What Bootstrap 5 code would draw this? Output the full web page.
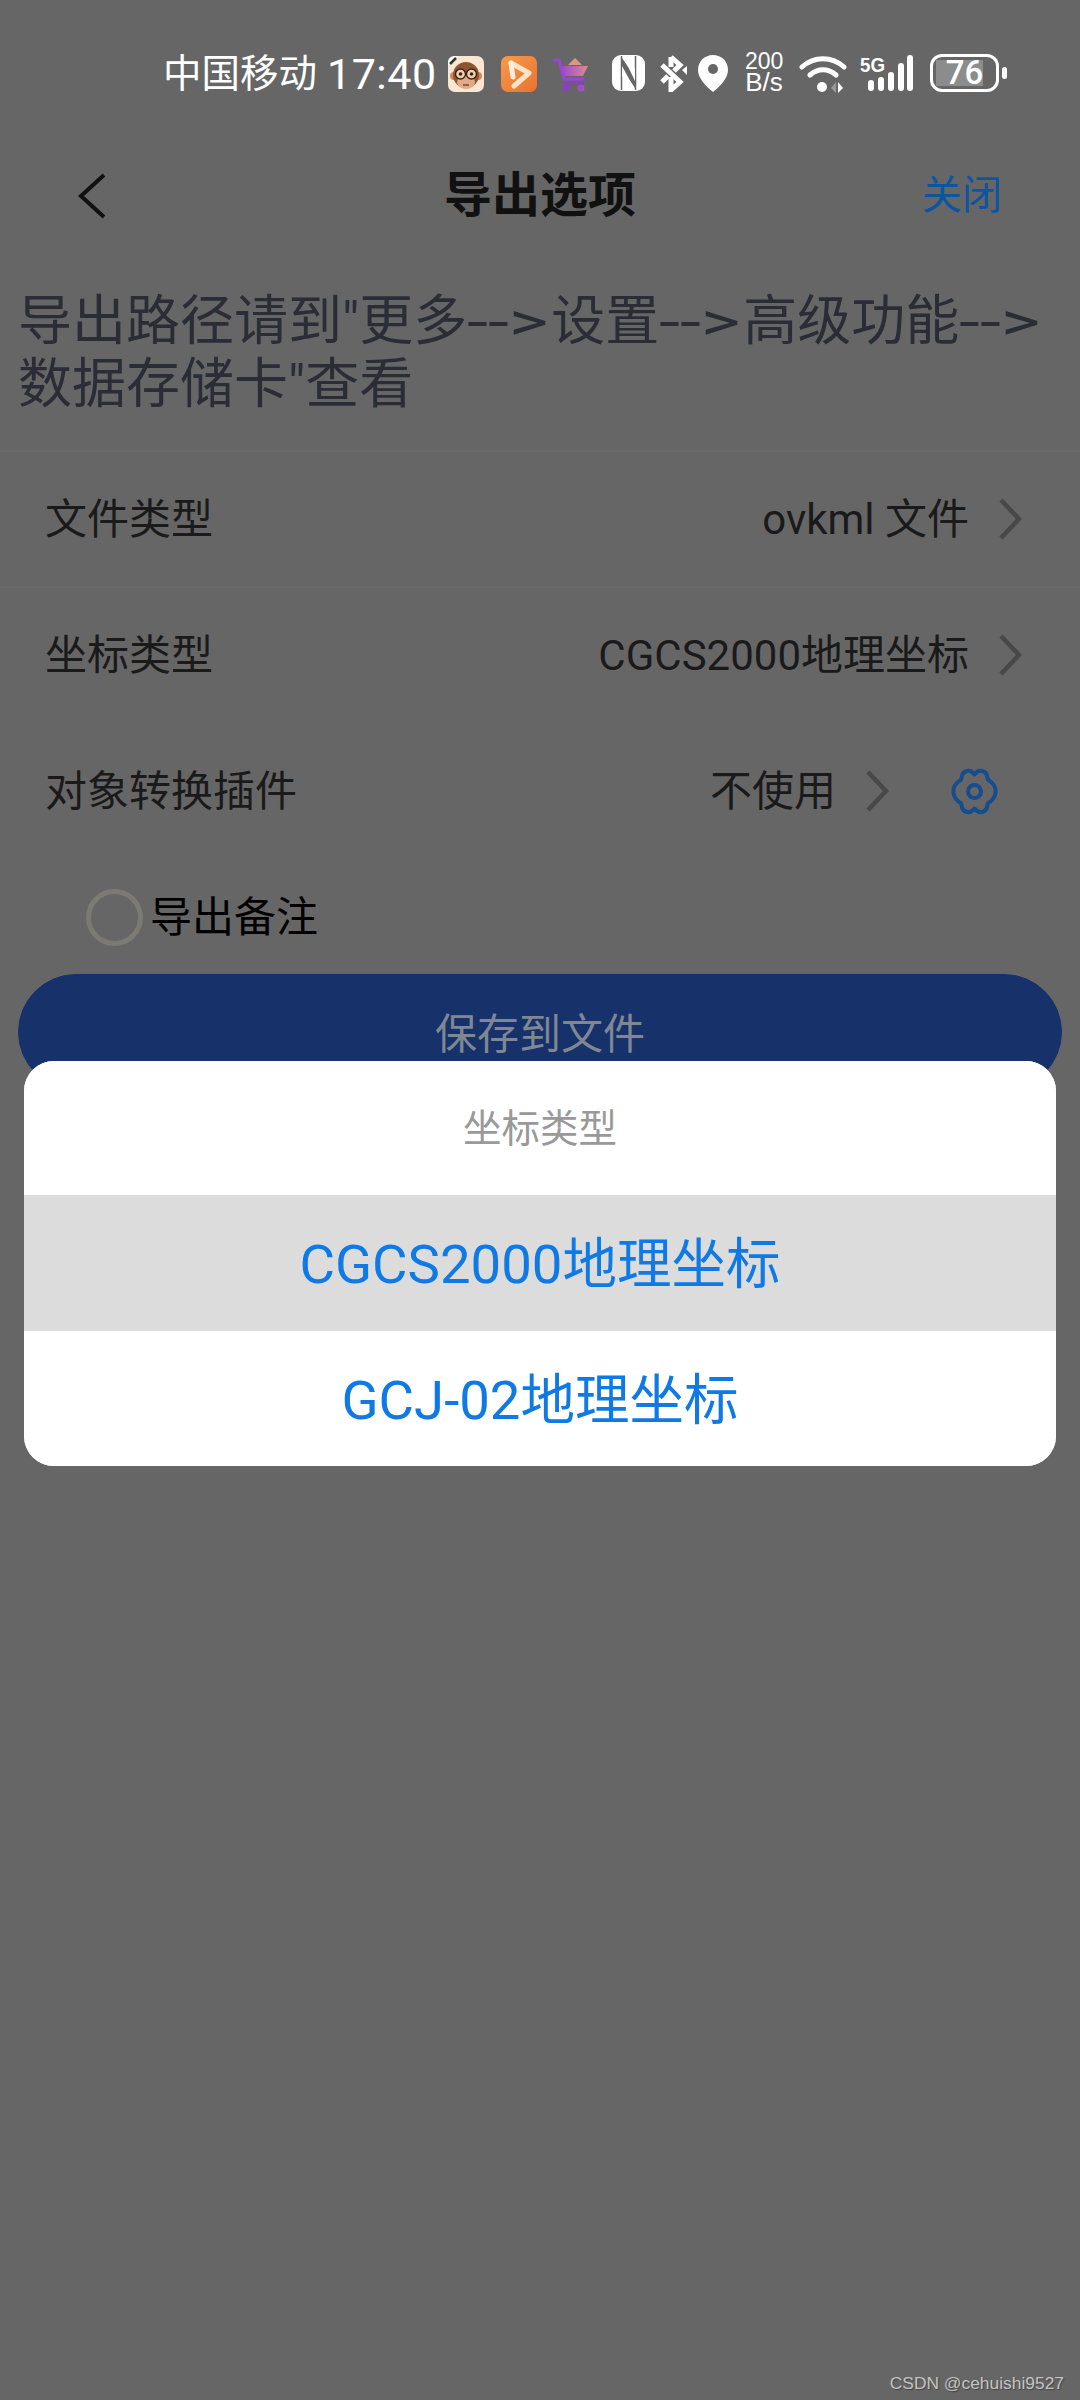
<!DOCTYPE html>
<html lang="zh-CN">
<head>
<meta charset="UTF-8">
<meta name="viewport" content="width=device-width, initial-scale=1.0">
<title>导出选项</title>
<link href="https://cdn.jsdelivr.net/npm/bootstrap@5.3.0/dist/css/bootstrap.min.css" rel="stylesheet">
<style>
body { background: #666; font-family: Roboto, "Noto Sans CJK SC", sans-serif; }
.phone { width: 1080px; height: 2400px; background: #666; position: relative; overflow: hidden; }

/* status bar */
.status-bar { height: 110px; padding: 50px 0 0 163px; color: #fff; align-items: flex-start; }
.carrier { font-size: 38.500px; line-height: 48px; width: 164px; }
.clock { font-size: 43px; line-height: 48px; width: 122px; letter-spacing: .5px; }
.status-bar svg { display: block; flex: none; }
.speed { width: 38px; margin: 1px 16px 0 17px; font-size: 23px; line-height: 20px; text-align: center; font-family: "Liberation Sans", sans-serif; }
.speed span { display: block; font-size: 26px; line-height: 23px; }
.batt { width: 69px; height: 38px; margin: 4px 3px 0 16px; border: 3px solid #fff; border-radius: 12px; position: relative; font-size: 33px; line-height: 32px; text-align: center; }
.batt-fill { position: absolute; left: 3px; top: 3px; bottom: 3px; background: #8c8c8c; }
.batt b { position: relative; font-weight: 500; }
.batt-nub { width: 5px; height: 12px; margin-top: 17px; background: #fff; border-radius: 3px; }

/* nav */
.top-nav { height: 172px; padding: 0 78px; position: relative; }
.top-title { flex: 1; text-align: center; font-size: 48px; font-weight: 700; color: #111; padding-left: 52px; }
.top-close { font-size: 40px; color: #0e55a1; }

.hint-text { margin: 0; padding: 8px 18px 34px; font-size: 54px; line-height: 63px; color: #2a2d36; white-space: nowrap; }
.hint-arrow { display: inline-block; width: 84px; transform: scaleX(1.4); transform-origin: left center; }

.opt-row { height: 136px; padding: 0 58px 0 45px; font-size: 42px; color: #1a1a1a; border-top: 2px solid #6a6a6a; }
.opt-row + .opt-row { border-top-color: #696969; }
.opt-row.last { border-top: 0; padding: 2px 80px 0 45px; }
.opt-value { font-size: 42px; margin-right: 29px; }
.opt-row.last .opt-chev { margin-right: -5px; }
.opt-gear { margin-left: 66px; margin-right: 1px; }

.check-row { height: 116px; padding: 2px 0 0 86px; font-size: 42px; color: #000; }
.check-dot { width: 57px; height: 57px; border-radius: 50%; border: 5px solid #7b7b73; margin-right: 7px; flex: none; }

.save-wrap { padding: 0 18px; }
.save-btn { height: 116px; padding-top: 10px; --bs-btn-bg: #17316b; --bs-btn-color: #7f8794; --bs-btn-border-color: #17316b; --bs-btn-font-size: 42px; --bs-btn-border-radius: 58px; }

/* action sheet */
.sheet { position: absolute; left: 24px; top: 1061px; width: 1032px; height: 405px; border: 0; border-radius: 30px; overflow: hidden; }
.sheet .list-group-item { border: 0; padding: 4px 0 0; display: flex; align-items: center; justify-content: center; text-align: center; background: #fff; color: #0f7ae5; font-size: 54.500px; height: 136px; }
.sheet .sheet-head { height: 134px; padding-top: 2px; color: #999; font-size: 38.500px; }
.sheet .sheet-pick { background: #dcdcdc; }

.mark-text { position: absolute; right: 16px; top: 2371px; font-family: "Liberation Sans", sans-serif; font-size: 17.400px; line-height: 24px; color: #c4c4c4; text-shadow: 1px 1px 1px #444; }
</style>
</head>
<body class="m-0">
<div class="phone d-flex flex-column">

  <!-- status bar -->
  <div class="status-bar d-flex">
    <div class="carrier">中国移动</div>
    <div class="clock">17:40</div>
    <svg width="36" height="36" viewBox="0 0 36 36" style="margin:6px 0 0 -1px">
      <rect width="36" height="36" rx="7" fill="#fbe6d2"/>
      <path d="M0 9V7Q0 0 7 0H9Z" fill="#fff"/>
      <path d="M2 8 8 2" stroke="#333" stroke-width="2.500"/>
      <circle cx="6" cy="20" r="4" fill="#c98a62"/><circle cx="30" cy="20" r="4" fill="#c98a62"/>
      <circle cx="18" cy="19" r="13" fill="#8f5232"/>
      <ellipse cx="18" cy="26" rx="9" ry="7" fill="#e2ab86"/>
      <circle cx="12.500" cy="18" r="5" fill="#f2cfae" stroke="#3a2418" stroke-width="1.400"/>
      <circle cx="23.500" cy="18" r="5" fill="#f2cfae" stroke="#3a2418" stroke-width="1.400"/>
      <circle cx="12.500" cy="18" r="1.800" fill="#3a2418"/><circle cx="23.500" cy="18" r="1.800" fill="#3a2418"/>
      <path d="M15 29h6" stroke="#7a4326" stroke-width="1.400"/>
    </svg>
    <svg width="36" height="36" viewBox="0 0 36 36" style="margin:6px 0 0 17px">
      <defs><linearGradient id="playGrad" x1="0" y1="0" x2="1" y2="1"><stop offset="0" stop-color="#f79a4c"/><stop offset="1" stop-color="#e9722f"/></linearGradient></defs>
      <rect width="36" height="36" rx="7" fill="url(#playGrad)"/>
      <path d="M10 7 28 17 13 30" fill="none" stroke="#fde3c8" stroke-width="5" stroke-linecap="round" stroke-linejoin="round"/>
      <path d="M10 7 12 21" stroke="#fdeedd" stroke-width="5" stroke-linecap="round"/>
    </svg>
    <svg width="38" height="36" viewBox="0 0 38 36" style="margin:7px 0 0 15px">
      <defs><linearGradient id="cartGrad" x1="0" x2="1"><stop offset="0" stop-color="#9a45d8"/><stop offset="1" stop-color="#d68f8a"/></linearGradient></defs>
      <path d="M1 3H7L12 22H32" fill="none" stroke="#9a45d8" stroke-width="3"/>
      <path d="M9 9H36L31 19H12Z" fill="url(#cartGrad)"/>
      <path d="M16 8 23 1 30 8Z" fill="#d99a7e"/>
      <circle cx="14" cy="31" r="3.500" fill="#8a3fc8"/><circle cx="29" cy="31" r="3.500" fill="#a04fc8"/>
      <path d="M12 26H32" stroke="#8a3fc8" stroke-width="2.500"/>
    </svg>
    <svg width="33" height="36" viewBox="0 0 33 36" style="margin:5px 0 0 22px">
      <rect width="33" height="36" rx="9" fill="#fff"/>
      <path d="M9.500 1V35M23.500 1V35" stroke="#666" stroke-width="1.500"/>
      <path d="M10 3V14L23 33V22Z" fill="#666"/>
      <path d="M12 3H16L23 14V26Z" fill="#fff"/>
      <path d="M10 11 22 33H17L10 21Z" fill="#fff"/>
    </svg>
    <svg width="27" height="37" viewBox="0 0 27 37" style="margin:5px 0 0 15px">
      <path d="M2 10 20 27 11 35V22M2 27 8 21M11 2 20 10 14 16M11 2V12" fill="none" stroke="#fff" stroke-width="5"/>
      <path d="M22 15 27 11V20Z" fill="#fff"/>
    </svg>
    <svg width="30" height="37" viewBox="0 0 30 37" style="margin:5px 0 0 11px">
      <path d="M15 0C6.500 0 0 6.500 0 15 0 24 9 32 15 37 21 32 30 24 30 15 30 6.500 23.500 0 15 0Z" fill="#fff"/>
      <circle cx="15" cy="14" r="5" fill="#666"/>
    </svg>
    <div class="speed">200<span>B/s</span></div>
    <svg width="48" height="38" viewBox="0 0 48 38" style="margin-top:5px">
      <path d="M3 12C15 1 33 1 45 12M11 20C19 13 29 13 37 20" fill="none" stroke="#fff" stroke-width="5" stroke-linecap="round"/>
      <circle cx="23" cy="32" r="5" fill="#fff"/>
      <path d="M32 33 37 27V38Z" fill="#999"/>
      <path d="M39 27 44 33 39 38Z" fill="#fff"/>
    </svg>
    <svg width="54" height="42" viewBox="0 0 54 42" style="margin:1px 0 0 13px">
      <text x="0" y="21" font-family="Liberation Sans, sans-serif" font-size="20" font-weight="700" fill="#fff" textLength="25" lengthAdjust="spacingAndGlyphs">5G</text>
      <rect x="8" y="29" width="6" height="11" rx="3" fill="#fff"/>
      <rect x="18" y="26" width="6" height="14" rx="3" fill="#fff"/>
      <rect x="28" y="21" width="6" height="19" rx="3" fill="#fff"/>
      <rect x="38" y="12" width="6" height="28" rx="3" fill="#fff"/>
      <rect x="47" y="4" width="6" height="36" rx="3" fill="#fff"/>
    </svg>
    <div class="batt"><div class="batt-fill" style="width:47px"></div><b>76</b></div>
    <div class="batt-nub"></div>
  </div>

  <!-- header -->
  <div class="top-nav d-flex align-items-center">
    <svg width="28" height="46" viewBox="0 0 28 46"><path d="M26 2 3 23 26 44" fill="none" stroke="#111" stroke-width="4"/></svg>
    <div class="top-title">导出选项</div>
    <div class="top-close">关闭</div>
  </div>

  <p class="hint-text">导出路径请到"更多<span class="hint-arrow">--&gt;</span>设置<span class="hint-arrow">--&gt;</span>高级功能<span class="hint-arrow">--&gt;</span><br>数据存储卡"查看</p>

  <div class="opt-row d-flex align-items-center justify-content-between">
    <span>文件类型</span>
    <span class="d-flex align-items-center"><span class="opt-value">ovkml 文件</span>
      <svg width="24" height="42" viewBox="0 0 24 42"><path d="M3 2 21 21 3 40" fill="none" stroke="#484848" stroke-width="4.500"/></svg></span>
  </div>
  <div class="opt-row d-flex align-items-center justify-content-between">
    <span>坐标类型</span>
    <span class="d-flex align-items-center"><span class="opt-value">CGCS2000地理坐标</span>
      <svg width="24" height="42" viewBox="0 0 24 42"><path d="M3 2 21 21 3 40" fill="none" stroke="#484848" stroke-width="4.500"/></svg></span>
  </div>
  <div class="opt-row last d-flex align-items-center justify-content-between">
    <span>对象转换插件</span>
    <span class="d-flex align-items-center"><span class="opt-value">不使用</span>
      <svg class="opt-chev" width="24" height="42" viewBox="0 0 24 42"><path d="M3 2 21 21 3 40" fill="none" stroke="#484848" stroke-width="4.500"/></svg>
      <svg class="opt-gear" width="49" height="47" viewBox="0 0 49 47">
        <path d="M24.500 6.500Q28 2 32 3Q37 4 37.500 10Q37.500 12 40 13Q46 18 45.500 23.500Q46 29 40 34Q37.500 35 37.500 37Q37 43 32 44Q28 45 24.500 40.500Q21 45 17 44Q12 43 11.500 37Q11.500 35 9 34Q3 29 3.500 23.500Q3 18 9 13Q11.500 12 11.500 10Q12 4 17 3Q21 2 24.500 6.500Z" fill="none" stroke="#174c8e" stroke-width="4" stroke-linejoin="round"/>
        <circle cx="24.500" cy="23.500" r="6.500" fill="none" stroke="#174c8e" stroke-width="4"/>
      </svg></span>
  </div>

  <div class="check-row d-flex align-items-center">
    <div class="check-dot"></div>
    <span>导出备注</span>
  </div>

  <div class="save-wrap">
    <button type="button" class="btn save-btn w-100">保存到文件</button>
  </div>

  <!-- coordinate type picker -->
  <div class="sheet card">
    <div class="list-group list-group-flush">
      <div class="list-group-item sheet-head">坐标类型</div>
      <div class="list-group-item sheet-pick">CGCS2000地理坐标</div>
      <div class="list-group-item">GCJ-02地理坐标</div>
    </div>
  </div>

  <div class="mark-text">CSDN @cehuishi9527</div>
</div>
<script src="https://cdn.jsdelivr.net/npm/bootstrap@5.3.0/dist/js/bootstrap.bundle.min.js"></script>
</body>
</html>
